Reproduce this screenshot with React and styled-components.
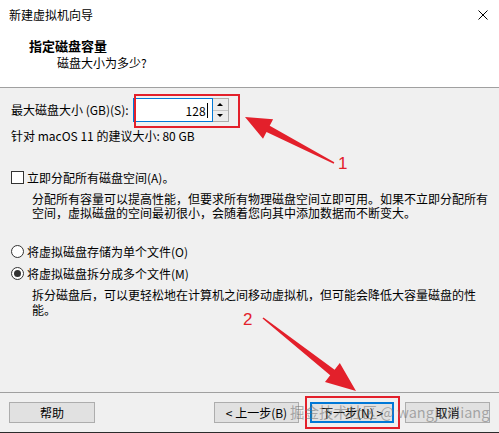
import React from "react";
import styled, { createGlobalStyle } from "styled-components";

const GlobalStyle = createGlobalStyle`
  html, body {
    margin: 0;
    padding: 0;
    background: #f0f0f0;
  }
  * {
    box-sizing: border-box;
  }
`;

const Window = styled.div`
  position: relative;
  display: flex;
  flex-direction: column;
  width: 499px;
  height: 433px;
  background: #f0f0f0;
  border-bottom: 1px solid #2b2b2b;
  font-family: "Noto Sans CJK SC", "Noto Sans", sans-serif;
  font-size: 12px;
  color: #000;
  overflow: hidden;
`;

const TitleBar = styled.div`
  display: flex;
  align-items: center;
  justify-content: space-between;
  height: 30px;
  padding: 0 11px 0 9px;
  background: #fff;
  line-height: 16px;
`;

const CloseIcon = styled.svg`
  display: block;
  width: 10px;
  height: 10px;
`;

const Header = styled.div`
  display: flex;
  flex-direction: column;
  height: 58px;
  padding: 8px 0 0 29px;
  background: #fff;
  border-bottom: 1px solid #a0a0a0;
`;

const HeaderTitle = styled.div`
  font-size: 13px;
  font-weight: 700;
  line-height: 16px;
`;

const HeaderSub = styled.div`
  margin: 1px 0 0 28px;
  line-height: 16px;
`;

const Body = styled.div`
  flex: 1;
  display: flex;
  flex-direction: column;
  padding: 10px 11px 0 11px;
`;

const SizeRow = styled.div`
  display: flex;
  align-items: center;
  height: 24px;
`;

const FieldLabel = styled.span`
  line-height: 16px;
  margin-right: 4px;
  white-space: nowrap;
`;

const SpinBox = styled.div`
  display: flex;
  height: 24px;
`;

const SpinInput = styled.div`
  display: flex;
  align-items: center;
  justify-content: flex-end;
  width: 80px;
  height: 24px;
  padding-right: 4px;
  background: #fff;
  border: 1px solid #0078d7;
`;

const Caret = styled.span`
  display: inline-block;
  width: 1px;
  height: 15px;
  margin-left: 1px;
  background: #000;
`;

const SpinButtons = styled.div`
  display: flex;
  flex-direction: column;
  width: 16px;
  height: 24px;
  border: 1px solid #adadad;
  border-left: none;
`;

const SpinButton = styled.div`
  flex: 1;
  display: flex;
  align-items: center;
  justify-content: center;
  background: #ececec;
  border-top: ${({ $bottom }) => ($bottom ? "1px solid #c4c4c4" : "none")};
`;

const Arrow = styled.span`
  width: 0;
  height: 0;
  border-left: 3px solid transparent;
  border-right: 3px solid transparent;
  ${({ $down }) =>
    $down ? "border-top: 3px solid #000;" : "border-bottom: 3px solid #000;"}
`;

const Hint = styled.div`
  margin-top: 6px;
  line-height: 16px;
`;

const OptionRow = styled.div`
  display: flex;
  align-items: center;
  height: 16px;
  margin-top: ${({ $top }) => $top}px;
`;

const CheckBox = styled.span`
  width: 13px;
  height: 13px;
  margin-right: 3px;
  background: #fff;
  border: 1px solid #333;
`;

const Radio = styled.span`
  display: flex;
  align-items: center;
  justify-content: center;
  width: 13px;
  height: 13px;
  margin-right: 3px;
  border-radius: 50%;
  background: #fff;
  border: 1px solid #333;
  &::after {
    content: "";
    width: 7px;
    height: 7px;
    border-radius: 50%;
    background: ${({ $checked }) => ($checked ? "#333" : "transparent")};
  }
`;

const Paragraph = styled.div`
  margin-top: ${({ $top }) => $top}px;
  padding-left: 21px;
  line-height: ${({ $lh }) => $lh}px;
  white-space: nowrap;
`;

const Footer = styled.div`
  display: flex;
  align-items: flex-start;
  height: 40px;
  padding: 9px 9px 0 9px;
  border-top: 1px solid #a0a0a0;
`;

const Button = styled.div`
  display: flex;
  align-items: center;
  justify-content: center;
  width: ${({ $w }) => $w}px;
  height: 21px;
  margin-left: ${({ $left }) => $left || 0}px;
  background: #e1e1e1;
  border: ${({ $primary }) =>
    $primary ? "2px solid #0078d7" : "1px solid #adadad"};
  line-height: 16px;
  white-space: nowrap;
`;

const Spacer = styled.div`
  flex: 1;
`;

const Overlay = styled.svg`
  position: absolute;
  left: 0;
  top: 0;
  width: 499px;
  height: 433px;
  pointer-events: none;
`;

const Mark = styled.div`
  position: absolute;
  left: ${({ $x }) => $x}px;
  top: ${({ $y }) => $y}px;
  width: ${({ $w }) => $w}px;
  height: ${({ $h }) => $h}px;
  border: 2px solid #e3202b;
  pointer-events: none;
`;

const Num = styled.span`
  position: absolute;
  left: ${({ $x }) => $x}px;
  top: ${({ $y }) => $y}px;
  font-family: "Liberation Sans", Arial, sans-serif;
  font-size: 17px;
  line-height: 18px;
  color: #e3202b;
`;

const Watermark = styled.span`
  position: absolute;
  left: 290px;
  top: 403px;
  font-family: "Noto Sans CJK SC", "Noto Sans", sans-serif;
  font-size: 14.5px;
  line-height: 18px;
  color: rgba(110, 110, 110, 0.55);
  white-space: nowrap;
  pointer-events: none;
`;

function arrowPoints(tx, ty, hx, hy, headLen, headW, tailW, neckW) {
  const dx = hx - tx;
  const dy = hy - ty;
  const len = Math.hypot(dx, dy);
  const ux = dx / len;
  const uy = dy / len;
  const nx = -uy;
  const ny = ux;
  const bx = hx - ux * headLen;
  const by = hy - uy * headLen;
  const pts = [
    [tx + (nx * tailW) / 2, ty + (ny * tailW) / 2],
    [bx + (nx * neckW) / 2, by + (ny * neckW) / 2],
    [bx + (nx * headW) / 2, by + (ny * headW) / 2],
    [hx, hy],
    [bx - (nx * headW) / 2, by - (ny * headW) / 2],
    [bx - (nx * neckW) / 2, by - (ny * neckW) / 2],
    [tx - (nx * tailW) / 2, ty - (ny * tailW) / 2],
  ];
  return pts.map((p) => p.map((v) => v.toFixed(1)).join(",")).join(" ");
}

const App = () => {
  return (
    <>
      <GlobalStyle />
      <Window>
        <TitleBar>
          <span>新建虚拟机向导</span>
          <CloseIcon viewBox="0 0 10 10">
            <path d="M0.5 0.5 L9.5 9.5 M9.5 0.5 L0.5 9.5" stroke="#000" strokeWidth="1" />
          </CloseIcon>
        </TitleBar>

        <Header>
          <HeaderTitle>指定磁盘容量</HeaderTitle>
          <HeaderSub>磁盘大小为多少?</HeaderSub>
        </Header>

        <Body>
          <SizeRow>
            <FieldLabel>最大磁盘大小 (GB)(S):</FieldLabel>
            <SpinBox>
              <SpinInput>
                128
                <Caret />
              </SpinInput>
              <SpinButtons>
                <SpinButton>
                  <Arrow />
                </SpinButton>
                <SpinButton $bottom>
                  <Arrow $down />
                </SpinButton>
              </SpinButtons>
            </SpinBox>
          </SizeRow>
          <Hint>针对 macOS 11 的建议大小: 80 GB</Hint>

          <OptionRow $top={25}>
            <CheckBox />
            <span>立即分配所有磁盘空间(A)。</span>
          </OptionRow>
          <Paragraph $top={7} $lh={14}>
            分配所有容量可以提高性能，但要求所有物理磁盘空间立即可用。如果不立即分配所有
            <br />
            空间，虚拟磁盘的空间最初很小，会随着您向其中添加数据而不断变大。
          </Paragraph>

          <OptionRow $top={23}>
            <Radio />
            <span>将虚拟磁盘存储为单个文件(O)</span>
          </OptionRow>
          <OptionRow $top={6}>
            <Radio $checked />
            <span>将虚拟磁盘拆分成多个文件(M)</span>
          </OptionRow>
          <Paragraph $top={6} $lh={15}>
            拆分磁盘后，可以更轻松地在计算机之间移动虚拟机，但可能会降低大容量磁盘的性
            <br />
            能。
          </Paragraph>
        </Body>

        <Footer>
          <Button $w={86}>帮助</Button>
          <Spacer />
          <Button $w={85}>&lt; 上一步(B)</Button>
          <Button $w={84} $left={11} $primary>
            下一步(N) &gt;
          </Button>
          <Button $w={85} $left={11}>
            取消
          </Button>
        </Footer>

        <Mark $x={134} $y={94} $w={106} $h={34} />
        <Mark $x={305} $y={396} $w={95} $h={33} />
        <Overlay viewBox="0 0 499 433">
          <polygon
            points={arrowPoints(334, 163, 245, 117, 26, 22, 1.5, 7)}
            fill="#e3202b"
          />
          <polygon
            points={arrowPoints(263, 318, 356, 391, 30, 24, 1.5, 7)}
            fill="#e3202b"
          />
        </Overlay>
        <Num $x={338} $y={155}>1</Num>
        <Num $x={243} $y={311}>2</Num>
        <Watermark>掘金技术社区 @ wangjunliang</Watermark>
      </Window>
    </>
  );
};

export default App;
